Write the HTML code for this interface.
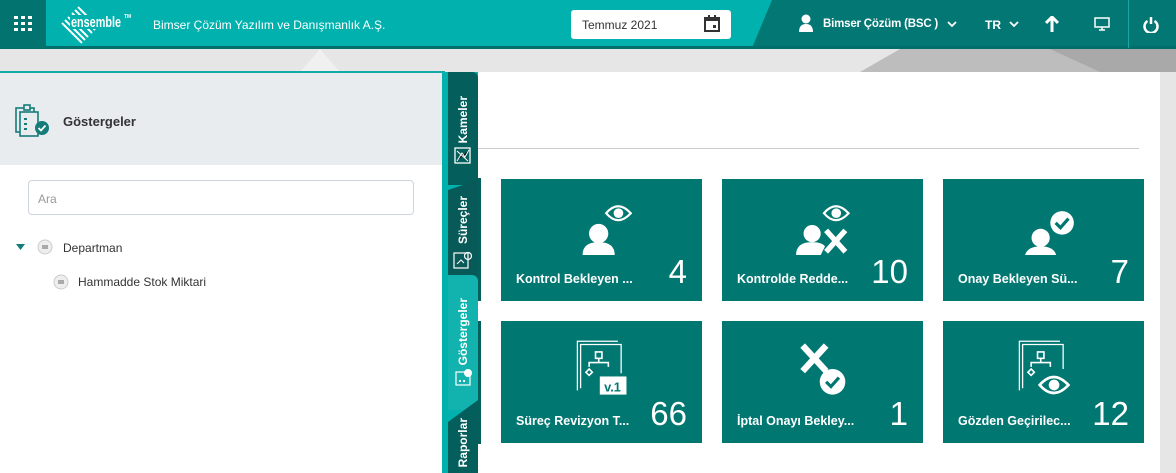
<!DOCTYPE html>
<html><head><meta charset="utf-8"><style>
*{margin:0;padding:0;box-sizing:border-box}
body{width:1176px;height:473px;overflow:hidden;font-family:"Liberation Sans",sans-serif;background:#e6e6e6;position:relative}
.hdr{position:absolute;left:0;top:0;width:1176px;height:48px;background:#027773}
.hdr .lt{position:absolute;left:0;top:0;width:780px;height:48px;background:#00b1ad;clip-path:polygon(0 0,772px 0,752px 48px,0 48px)}
.bl{position:absolute;left:0;top:46px;width:1176px;height:3px;background:#026e6b}
.grid{position:absolute;left:0;top:0;width:46px;height:48px;background:#037370}
.abs{position:absolute}
.w{color:#fff}
.tile{position:absolute;width:201px;height:122px;background:#017772;color:#fff}
.tile .l{position:absolute;left:15px;bottom:15px;font-size:12.5px;font-weight:bold}
.tile .n{position:absolute;right:15px;bottom:10px;font-size:33px}
.tile svg{position:absolute;left:70px;top:16px}
.vt{position:absolute;writing-mode:vertical-rl;transform:rotate(180deg);color:#fff;font-size:12px;font-weight:bold}
</style></head><body>
<div class="hdr"><div class="lt"></div></div>
<div class="bl"></div>
<div class="grid"><svg class="abs" style="left:14px;top:16px" width="18" height="16"><g fill="#fff"><rect x="0" y="0" width="4" height="3"/><rect x="7" y="0" width="4" height="3"/><rect x="14" y="0" width="4" height="3"/><rect x="0" y="6" width="4" height="3"/><rect x="7" y="6" width="4" height="3"/><rect x="14" y="6" width="4" height="3"/><rect x="0" y="12" width="4" height="3"/><rect x="7" y="12" width="4" height="3"/><rect x="14" y="12" width="4" height="3"/></g></svg></div>
<svg class="abs" style="left:58px;top:3px" width="90" height="42"><defs><clipPath id="dm"><polygon points="22,2 42,22 22,42 2,22"/></clipPath></defs><g clip-path="url(#dm)" stroke="#fff" stroke-width="2"><path d="M0 4 L40 44 M0 10 L34 44 M4 0 L44 40 M10 0 L44 34 M16 0 L44 28 M0 16 L28 44"/></g><rect x="12" y="12" width="52" height="14" fill="#00b1ad"/><text x="13" y="24" font-size="15" font-weight="bold" fill="#fff" font-family="Liberation Sans" textLength="50" lengthAdjust="spacingAndGlyphs">ensemble</text><text x="66" y="15" font-size="5" fill="#fff" font-weight="bold">TM</text></svg>
<div class="abs w" style="left:153px;top:18px;font-size:12px">Bimser Çözüm Yazılım ve Danışmanlık A.Ş.</div>
<div class="abs" style="left:571px;top:10px;width:160px;height:29px;background:#fff;border-radius:3px"></div>
<div class="abs" style="left:582px;top:18px;font-size:12px;color:#333">Temmuz 2021</div>
<svg class="abs" style="left:704px;top:15px" width="16" height="17"><rect x="1" y="3" width="14" height="13" fill="none" stroke="#333" stroke-width="2"/><rect x="1" y="3" width="14" height="3" fill="#333"/><rect x="4" y="0" width="2" height="4" fill="#333"/><rect x="10" y="0" width="2" height="4" fill="#333"/><rect x="9" y="10" width="3" height="3" fill="#333"/></svg>
<svg class="abs" style="left:799px;top:14px" width="14" height="18"><circle cx="7" cy="5" r="4.5" fill="#fff"/><path d="M0 18 Q0 10 7 10 Q14 10 14 18Z" fill="#fff"/></svg>
<div class="abs w" style="left:823px;top:18px;font-size:11.5px;font-weight:bold;letter-spacing:-0.2px">Bimser Çözüm (BSC )</div>
<svg class="abs" style="left:947px;top:21px" width="10" height="7"><path d="M1 1 L5 5 L9 1" stroke="#fff" stroke-width="1.8" fill="none"/></svg>
<div class="abs w" style="left:985px;top:18px;font-size:12px;font-weight:bold">TR</div>
<svg class="abs" style="left:1009px;top:21px" width="10" height="7"><path d="M1 1 L5 5 L9 1" stroke="#fff" stroke-width="1.8" fill="none"/></svg>
<svg class="abs" style="left:1045px;top:16px" width="14" height="16"><path d="M7 1 L7 16 M1 7 L7 1 L13 7" stroke="#fff" stroke-width="3" fill="none"/></svg>
<svg class="abs" style="left:1094px;top:17px" width="16" height="14"><rect x="1" y="1" width="14" height="9" fill="none" stroke="#fff" stroke-width="1.5"/><path d="M5 13 L11 13 M8 10 L8 13" stroke="#fff" stroke-width="1.5"/></svg>
<div class="abs" style="left:1128px;top:0;width:1px;height:48px;background:#1aa7a3"></div>
<svg class="abs" style="left:1143px;top:16px" width="16" height="17"><path d="M4.5 5 A6.5 6.5 0 1 0 11.5 5" stroke="#fff" stroke-width="2.5" fill="none"/><path d="M8 1 L8 8" stroke="#fff" stroke-width="2.5"/></svg>
<svg class="abs" style="left:0;top:49px" width="1176" height="23"><polygon points="320,0 340,23 300,23" fill="#f0f0f0"/><polygon points="900,0 1176,0 1176,23 860,23" fill="#bdbdbd"/><polygon points="1050,0 1176,0 1176,23 1100,23" fill="#a9a9a9"/></svg>
<div class="abs" style="left:0;top:71px;width:445px;height:402px;background:#fff;border-top:2px solid #12aaa6"></div>
<div class="abs" style="left:0;top:73px;width:442px;height:92px;background:#e9ecef"></div>
<svg class="abs" style="left:15px;top:103px" width="36" height="36"><g fill="none" stroke="#157c78" stroke-width="1.6"><rect x="1" y="5" width="18" height="24"/><rect x="5" y="9" width="18" height="24" fill="#e9ecef"/><rect x="9" y="2" width="6" height="5" fill="#e9ecef"/></g><g fill="#157c78"><rect x="9" y="15" width="3" height="2"/><rect x="9" y="20" width="3" height="2"/><rect x="9" y="25" width="3" height="2"/><circle cx="27" cy="25" r="7"/></g><path d="M23.5 25 L26 27.5 L30.5 22.5" stroke="#fff" stroke-width="1.8" fill="none"/></svg>
<div class="abs" style="left:63px;top:114px;font-size:13px;font-weight:bold;color:#333">Göstergeler</div>
<div class="abs" style="left:28px;top:180px;width:386px;height:35px;border:1px solid #ced4da;border-radius:4px"></div>
<div class="abs" style="left:38px;top:192px;font-size:12px;color:#999">Ara</div>
<svg class="abs" style="left:16px;top:244px" width="9" height="6"><path d="M0 0 L9 0 L4.5 6Z" fill="#157c78"/></svg>
<svg class="abs" style="left:37px;top:239px" width="16" height="16"><circle cx="8" cy="8" r="7" fill="#eee" stroke="#ccc"/><rect x="5" y="6" width="6" height="4" fill="#aaa"/></svg>
<div class="abs" style="left:63px;top:241px;font-size:12px;color:#333">Departman</div>
<svg class="abs" style="left:53px;top:274px" width="16" height="16"><circle cx="8" cy="8" r="7" fill="#eee" stroke="#ccc"/><rect x="5" y="6" width="6" height="4" fill="#aaa"/></svg>
<div class="abs" style="left:78px;top:275px;font-size:12px;color:#333">Hammadde Stok Miktari</div>
<div class="abs" style="left:442px;top:72px;width:36px;height:401px;background:#00b1ad"></div>
<div class="abs" style="left:448px;top:72px;width:30px;height:113px;background:#035e5c;border-radius:0 6px 0 0"></div>
<div class="abs" style="left:448px;top:180px;width:30px;height:100px;background:#075a58;clip-path:polygon(0 10px,30px 0,30px 100px,0 100px)"></div>
<div class="abs" style="left:448px;top:275px;width:30px;height:135px;background:#12b3ae;border-radius:0 6px 0 0"></div>
<div class="abs" style="left:448px;top:400px;width:30px;height:73px;background:#035e5c;clip-path:polygon(0 22px,30px 0,30px 73px,0 73px)"></div>
<div class="vt" style="left:456px;top:96px">Kameler</div>
<div class="vt" style="left:456px;top:196px">Süreçler</div>
<div class="vt" style="left:456px;top:298px">Göstergeler</div>
<div class="vt" style="left:456px;top:418px">Raporlar</div>
<svg class="abs" style="left:454px;top:147px" width="18" height="18"><rect x="1" y="1" width="15" height="15" fill="none" stroke="#fff" stroke-width="1.3"/><path d="M3 14 L8 6 L11 10 L15 3 M3 4 L14 14" stroke="#fff" stroke-width="1"/></svg>
<svg class="abs" style="left:453px;top:250px" width="20" height="20"><rect x="1" y="3" width="14" height="15" fill="none" stroke="#fff" stroke-width="1.2"/><circle cx="15" cy="6" r="3.5" fill="none" stroke="#fff" stroke-width="1.2"/><path d="M4 14 L8 10 L11 13" stroke="#fff" stroke-width="1" fill="none"/></svg>
<svg class="abs" style="left:453px;top:367px" width="20" height="20"><rect x="3" y="5" width="14" height="13" fill="none" stroke="#fff" stroke-width="1.2"/><circle cx="15" cy="6" r="4" fill="#fff"/><g fill="#fff"><rect x="6" y="13" width="2" height="2"/><rect x="10" y="13" width="2" height="2"/></g></svg>
<div class="abs" style="left:478px;top:72px;width:682px;height:401px;background:#fff"></div>
<div class="abs" style="left:478px;top:148px;width:661px;height:1px;background:#ccc"></div>
<div class="abs" style="left:478px;top:178px;width:3px;height:123px;background:#035e5c"></div>
<div class="abs" style="left:478px;top:321px;width:3px;height:123px;background:#035e5c"></div>

<div class="tile" style="left:501px;top:179px"><svg width="66" height="60" viewBox="0 0 60 56"><circle cx="25" cy="36" r="9" fill="#fff"/><path d="M10 56 Q10 44 25 44 Q40 44 40 56Z" fill="#fff"/><path d="M32 17 Q43 4 55 17 Q43 30 32 17Z" fill="none" stroke="#fff" stroke-width="2"/><circle cx="43.5" cy="17" r="4.5" fill="#fff"/></svg><div class="l">Kontrol Bekleyen ...</div><div class="n">4</div></div>
<div class="tile" style="left:722px;top:179px"><svg width="66" height="60" viewBox="0 0 60 56"><circle cx="18" cy="36" r="8" fill="#fff"/><path d="M3 56 Q3 44 18 44 Q27 44 30 48 L26 56Z" fill="#fff"/><path d="M31 33 L49 53 M49 33 L31 53" stroke="#fff" stroke-width="5"/><path d="M29 17 Q40 4 52 17 Q40 30 29 17Z" fill="none" stroke="#fff" stroke-width="2"/><circle cx="40.5" cy="17" r="4.5" fill="#fff"/></svg><div class="l">Kontrolde Redde...</div><div class="n">10</div></div>
<div class="tile" style="left:943px;top:179px"><svg width="66" height="60" viewBox="0 0 60 56"><circle cx="25" cy="40" r="8.5" fill="#fff"/><path d="M10 60 Q10 48 25 48 Q40 48 40 60Z" fill="#fff"/><circle cx="45" cy="26" r="11" fill="#fff"/><path d="M39 26 L43.5 30.5 L51 22" stroke="#017772" stroke-width="3" fill="none"/></svg><div class="l">Onay Bekleyen Sü...</div><div class="n">7</div></div>
<div class="tile" style="left:501px;top:321px"><svg width="64" height="64" viewBox="0 0 60 60"><g fill="none" stroke="#fff" stroke-width="1.2"><path d="M6 50 L6 4 L44 4"/><path d="M9 48 L9 7 L47 7 L47 34"/></g><g fill="none" stroke="#fff" stroke-width="1.5"><rect x="23" y="14" width="6" height="6"/><path d="M26 20 L26 24 M17 28 L17 24 L35 24 L35 28"/><path d="M17 30 L20 33 L17 36 L14 33Z"/></g><rect x="27" y="37" width="25" height="17" fill="#fff"/><text x="31" y="51" font-size="12" font-weight="bold" fill="#017772">v.1</text></svg><div class="l">Süreç Revizyon T...</div><div class="n">66</div></div>
<div class="tile" style="left:722px;top:321px"><svg width="64" height="64" viewBox="0 0 60 60"><path d="M10 8 L32 32 M32 8 L10 32" stroke="#fff" stroke-width="6"/><circle cx="38" cy="42" r="12" fill="#fff"/><path d="M32 42 L36.5 46.5 L44 38" stroke="#017772" stroke-width="3" fill="none"/></svg><div class="l">İptal Onayı Bekley...</div><div class="n">1</div></div>
<div class="tile" style="left:943px;top:321px"><svg width="64" height="64" viewBox="0 0 60 60"><g fill="none" stroke="#fff" stroke-width="1.2"><path d="M6 50 L6 4 L44 4"/><path d="M9 48 L9 7 L47 7 L47 30"/></g><g fill="none" stroke="#fff" stroke-width="1.5"><rect x="23" y="14" width="6" height="6"/><path d="M26 20 L26 24 M17 28 L17 24 L35 24 L35 28"/><path d="M17 30 L20 33 L17 36 L14 33Z"/></g><path d="M25 45 Q38 30 52 45 Q38 60 25 45Z" fill="#017772" stroke="#fff" stroke-width="2.5"/><circle cx="38.5" cy="45" r="5" fill="#fff"/></svg><div class="l">Gözden Geçirilec...</div><div class="n">12</div></div>
</body></html>
